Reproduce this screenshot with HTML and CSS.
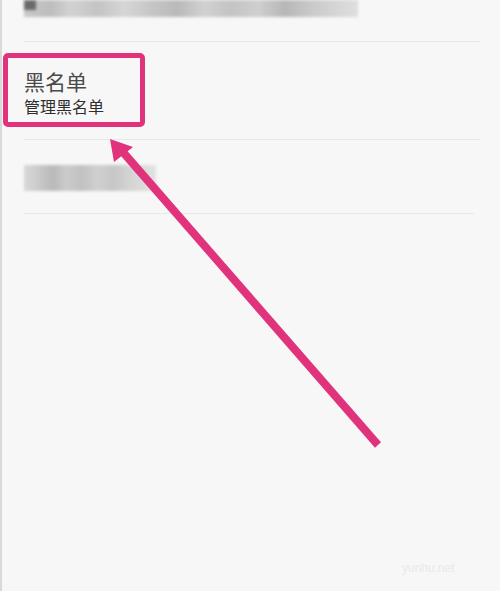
FILE: index.html
```html
<!DOCTYPE html>
<html lang="zh">
<head>
<meta charset="utf-8">
<link rel="stylesheet" href="styles.css">
</head>
<body>
<div class="screen">
  <div class="row row-top">
    <div class="blur blur-top"><span class="icon-dot"></span></div>
  </div>
  <div class="row row-black">
    <div class="title">黑名单</div>
    <div class="sub">管理黑名单</div>
  </div>
  <div class="row row-third">
    <div class="blur blur-mid"></div>
  </div>
  <div class="highlight"></div>
  <svg class="arrow" width="500" height="591" viewBox="0 0 500 591">
    <line x1="378" y1="445" x2="122" y2="151" stroke="#e0337b" stroke-width="8" stroke-linecap="butt"/>
    <polygon points="110,139 133,147 114,162" fill="#e0337b"/>
  </svg>
  <div class="watermark">yunhu.net</div>
</div>
</body>
</html>
```
FILE: styles.css
```css
html, body {
  margin: 0;
  padding: 0;
  background: #f7f7f7;
}
.screen {
  position: relative;
  width: 498px;
  height: 591px;
  border-left: 2px solid #d9d9d9;
  font-family: "Noto Sans CJK SC", "Noto Sans", sans-serif;
  overflow: hidden;
}
.row {
  margin-left: 22px;
  margin-right: 20px;
  border-bottom: 1px solid #e8e8e8;
  box-sizing: border-box;
}
.row-top {
  height: 42px;
}
.blur {
  filter: blur(1.5px);
}
.blur-top {
  position: relative;
  width: 334px;
  height: 17px;
  background: linear-gradient(90deg,
    #c9c9c9 0, #bdbdbd 8%, #d2d2d2 14%, #c4c4c4 22%, #d6d6d6 30%,
    #c6c6c6 38%, #b9b9b9 46%, #d1d1d1 54%, #c3c3c3 62%, #cfcfcf 70%,
    #b7b7b7 78%, #c9c9c9 86%, #d6d6d6 94%, #dedede 100%);
}
.icon-dot {
  position: absolute;
  left: 0;
  top: 0;
  width: 12px;
  height: 10px;
  background: #6a6a6a;
}
.row-black {
  height: 98px;
  padding-top: 25px;
}
.title {
  font-size: 21px;
  line-height: 28px;
  color: #4a4a4a;
}
.sub {
  font-size: 16px;
  line-height: 22px;
  color: #2e2e2e;
  margin-top: 0;
}
.row-third {
  height: 74px;
  padding-top: 25px;
  margin-right: 26px;
}
.blur-mid {
  width: 132px;
  height: 26px;
  background: linear-gradient(90deg,
    #d8d8d8 0, #c8c8c8 12%, #b9b9b9 22%, #cbcbcb 32%, #c1c1c1 44%,
    #d0d0d0 56%, #c6c6c6 68%, #d4d4d4 80%, #e2e2e2 100%);
}
.highlight {
  position: absolute;
  left: 1px;
  top: 53px;
  width: 142px;
  height: 74px;
  box-sizing: border-box;
  border: 5px solid #e0337b;
  border-radius: 5px;
}
.arrow {
  position: absolute;
  left: -2px;
  top: 0;
}
.watermark {
  position: absolute;
  left: 400px;
  top: 561px;
  font-family: "Liberation Sans", sans-serif;
  font-size: 12px;
  color: #e9e9e9;
}
```
